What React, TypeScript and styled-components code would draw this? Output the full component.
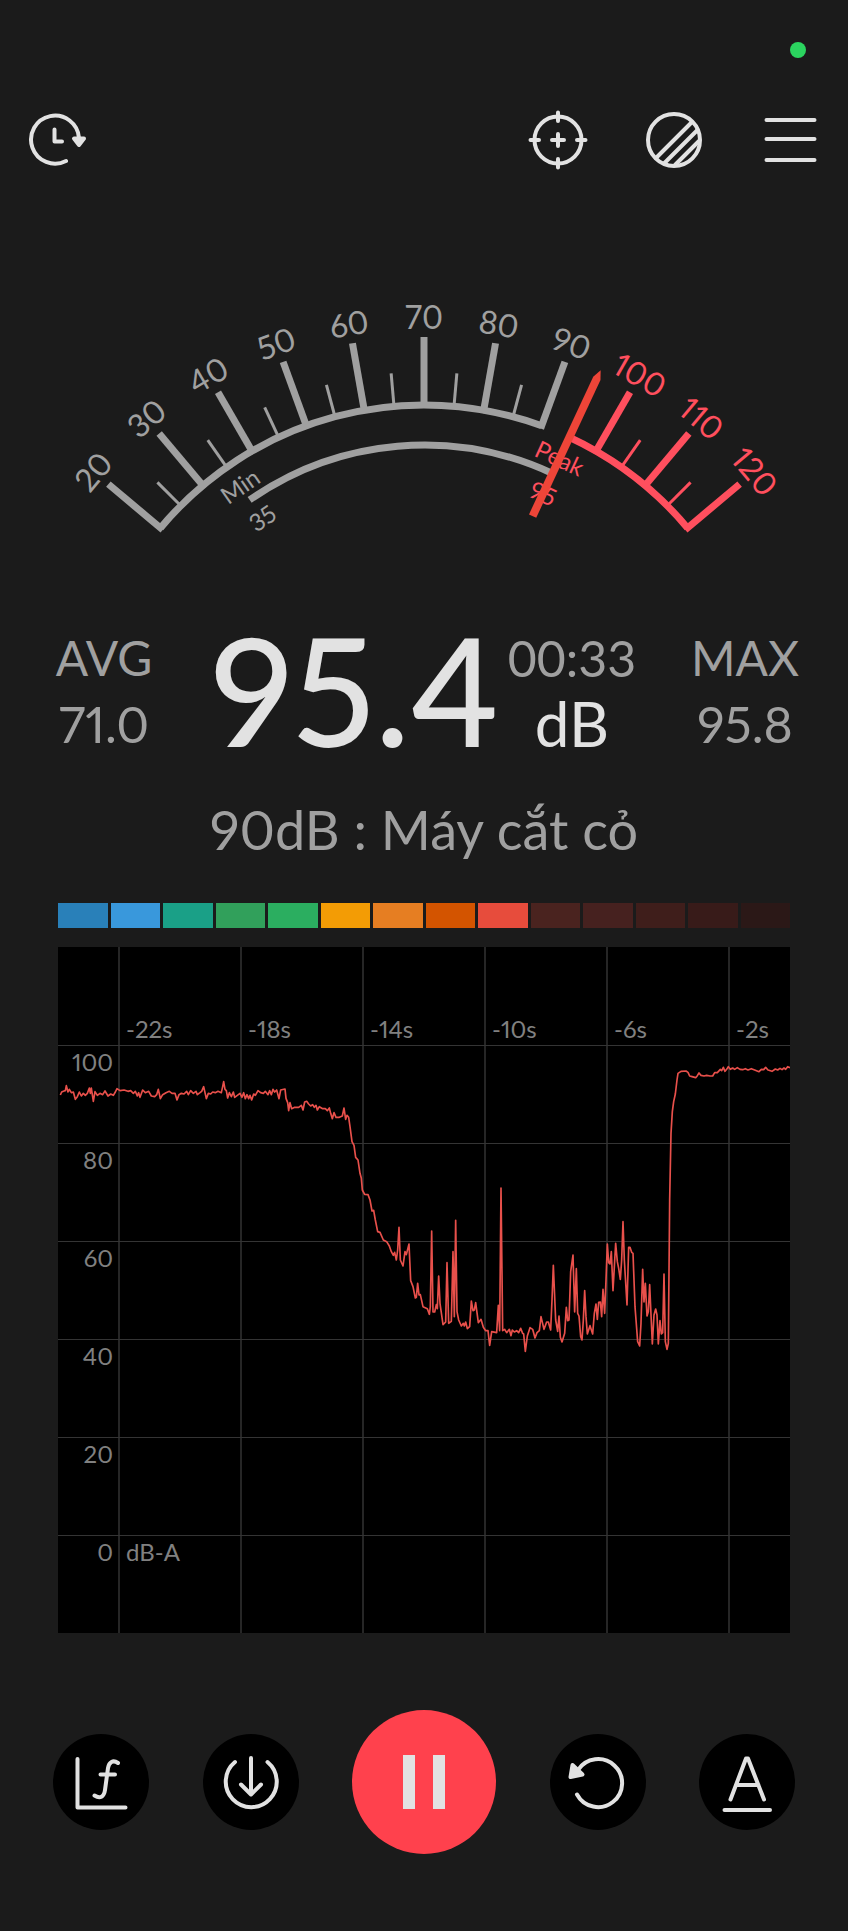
import React from "react";
import styled, { createGlobalStyle } from "styled-components";

const color = {
  page: "#1b1b1b",
  black: "#000000",
  white: "#e2e2e2",
  grey: "#a0a0a0",
  axis: "#808080",
  grid: "#262626",
  danger: "#ff4f5e",
  needle: "#ee4538",
  trace: "#e8504b",
  record: "#ff414d",
};

const GlobalStyle = createGlobalStyle`
  *, *::before, *::after { box-sizing: border-box; }
  body {
    margin: 0;
    background: ${color.page};
    font-family: Lato, "Noto Sans", sans-serif;
    font-variant-numeric: proportional-nums;
    color: ${color.grey};
  }
`;

const Page = styled.main`
  min-height: 100vh;
  display: flex;
  flex-direction: column;
  padding-bottom: 76px;
  background: ${color.page};
`;

const StatusBar = styled.div`
  display: flex;
  justify-content: flex-end;
  padding: 42px 42px 0;
`;

const MicDot = styled.span`
  width: 16px;
  height: 16px;
  border-radius: 50%;
  background: #2bd45f;
`;

const TopBar = styled.header`
  display: flex;
  align-items: center;
  justify-content: space-between;
  padding: 52px 28px 120px;
`;

const TopActions = styled.nav`
  display: flex;
  gap: 56px;
`;

const IconButton = styled.button`
  width: 60px;
  height: 60px;
  padding: 0;
  border: 0;
  background: none;
  color: ${color.white};
  cursor: pointer;
`;

const RoundButton = styled.button<{ $primary?: boolean }>`
  display: flex;
  align-items: center;
  justify-content: center;
  width: ${(p) => (p.$primary ? 144 : 96)}px;
  height: ${(p) => (p.$primary ? 144 : 96)}px;
  padding: 0;
  border: 0;
  border-radius: 50%;
  background: ${(p) => (p.$primary ? color.record : color.black)};
  color: ${color.white};
  cursor: pointer;
`;

const Drawing = styled.svg`
  display: block;
  fill: none;
  stroke: currentColor;
  stroke-width: 4;
  stroke-linecap: round;
  stroke-linejoin: round;
`;

const Gauge = styled.svg`
  display: block;
  width: 100%;
  height: auto;
`;

const GaugeText = styled.text<{ $size: number }>`
  font-size: ${(p) => p.$size}px;
  text-anchor: middle;
`;

const Readouts = styled.section`
  display: grid;
  grid-template-columns: 100px auto 104px;
  justify-content: space-between;
  padding: 79px 51px 0 54px;
`;

const Stack = styled.div`
  display: flex;
  flex-direction: column;
  align-items: center;
`;

const Stat = styled.span`
  font-size: 50px;
  line-height: 66px;
  white-space: nowrap;
`;

const StatLabel = styled(Stat)`
  font-size: 48px;
`;

const Level = styled.div`
  display: flex;
  gap: 8px;
  color: ${color.white};
`;

const LevelValue = styled.strong`
  font-size: 150px;
  font-weight: 500;
  line-height: 128px;
`;

const Elapsed = styled(Stat)`
  color: ${color.grey};
  font-variant-numeric: tabular-nums;
`;

const Unit = styled.span`
  font-size: 62px;
  line-height: 64px;
`;

const Caption = styled.p`
  margin: 41px 0;
  font-size: 54px;
  line-height: 64px;
  text-align: center;
`;

const Scale = styled.div`
  display: flex;
  gap: 3px;
  margin: 0 58px 19px;
`;

const Segment = styled.span<{ $fill: string }>`
  flex: 1;
  height: 25px;
  background: ${(p) => p.$fill};
`;

const ChartPanel = styled.figure`
  margin: 0 58px 77px;
  background: ${color.black};
`;

const Chart = styled.svg`
  display: block;
  width: 100%;
  height: auto;
`;

const AxisText = styled.text`
  font-size: 24px;
  fill: ${color.axis};
`;

const Controls = styled.footer`
  display: flex;
  align-items: center;
  justify-content: space-between;
  padding: 0 53px;
`;

const segments = [
  "#2980b9", "#3998dc", "#1aa087", "#31a05b", "#2bae60", "#f39c05", "#e67e22",
  "#d35400", "#e74c3c", "#4a231f", "#46211f", "#3f1e1b", "#381b19", "#2b1817",
];

/* Dial geometry: every mark is drawn upright and turned about the hub. */
const HUB_X = 424;
const HUB_Y = 459;
const ARC = 344;
const PEAK_ARC = 304;

const angleOf = (db: number) => db - 70;
const turn = (db: number) => `rotate(${angleOf(db)} ${HUB_X} ${HUB_Y})`;

function arcPath(radius: number, from: number, to: number) {
  const at = (db: number) => {
    const a = (angleOf(db) * Math.PI) / 180;
    return `${HUB_X + radius * Math.sin(a)} ${HUB_Y - radius * Math.cos(a)}`;
  };
  return `M${at(from)}A${radius} ${radius} 0 0 1 ${at(to)}`;
}

const majors = [20, 30, 40, 50, 60, 70, 80, 90, 100, 110, 120];
const minors = [25, 35, 45, 55, 65, 75, 85, 105, 115];
const tone = (db: number) => (db > 90 ? color.danger : color.grey);

function LevelGauge() {
  return (
    <Gauge viewBox="0 0 848 256" role="img" aria-label="Sound level dial">
      <g fill="none" strokeWidth="7">
        <path d={arcPath(ARC, 20, 90)} stroke={color.grey} />
        <path d={arcPath(ARC, 95, 120)} stroke={color.danger} />
        <path d={arcPath(PEAK_ARC, 35, 95)} stroke={color.grey} />
      </g>
      {majors.map((db) => (
        <g key={db} transform={turn(db)}>
          <line x1={HUB_X} x2={HUB_X} y1="47" y2="118" stroke={tone(db)} strokeWidth="7" />
          <GaugeText $size={32} x={HUB_X} y="39" fill={tone(db)}>{db}</GaugeText>
        </g>
      ))}
      {minors.map((db) => (
        <line
          key={db}
          transform={turn(db)}
          x1={HUB_X}
          x2={HUB_X}
          y1="82"
          y2="114"
          stroke={tone(db)}
          strokeWidth="3"
        />
      ))}
      <g transform={turn(35)} fill={color.grey}>
        <GaugeText $size={24} x={HUB_X} y="147">Min</GaugeText>
        <GaugeText $size={24} x={HUB_X} y="186">35</GaugeText>
      </g>
      <g transform={turn(95)} fill={color.danger}>
        <GaugeText $size={24} x={HUB_X} y="147">Peak</GaugeText>
        <GaugeText $size={24} x={HUB_X} y="186">95</GaugeText>
      </g>
      <path
        transform={turn(95)}
        d="M420 202V50L424 41L428 50V202Z"
        fill={color.needle}
      />
    </Gauge>
  );
}

/* Level history, three units to a pixel. */
const history =
  "7,444 11,435 18,432 22,431 25,416 30,435 34,427 40,437 46,435 52,457 58,449 64,435 70,447 76,439 82,445 88,439 94,423 97,439 100,423 106,463 111,434 118,445 126,439 134,443 141,432 150,447 158,441 166,445 172,435 177,425 186,431 198,429 210,433 218,431 226,439 232,433 238,447 242,437 246,451 254,429 262,437 272,433 280,447 290,449 296,443 301,427 307,455 314,443 324,437 334,433 342,439 351,439 357,459 363,443 370,439 378,441 386,433 391,443 398,431 406,439 414,433 418,443 426,437 431,433 437,419 445,455 451,439 458,441 464,435 472,437 480,433 490,437 494,419 497,404 501,427 505,431 509,453 514,437 520,449 526,435 530,451 538,445 546,439 552,451 557,437 562,455 567,443 572,455 576,445 581,459 587,441 592,445 600,431 608,437 616,439 622,433 630,443 635,431 640,443 645,427 650,435 656,429 663,455 668,429 681,426 684,454 689,467 692,491 696,467 701,485 710,481 722,481 730,475 735,489 740,465 746,463 752,471 758,477 764,473 769,481 774,475 778,489 784,479 794,485 802,485 808,491 814,483 818,499 823,515 828,497 834,511 844,511 853,507 858,483 863,517 867,505 872,511 876,539 882,584 888,595 893,631 900,639 906,679 910,694 " +
  "913,729 920,742 930,743 936,759 942,792 947,790 952,819 959,854 966,856 976,879 986,884 994,897 1000,914 1006,925 1010,916 1015,939 1019,909 1023,841 1027,939 1035,957 1041,914 1045,923 1053,891 1058,1001 1065,1019 1072,1053 1075,1051 1079,1009 1083,1044 1087,1043 1095,1079 1108,1085 1114,1102 1117,1079 1121,852 1125,1095 1130,1095 1135,1073 1138,1085 1142,987 1146,1069 1155,1133 1163,1125 1167,947 1172,1129 1180,1123 1185,914 1189,1109 1193,820 1197,1094 1202,1119 1210,1137 1216,1129 1219,1137 1223,1125 1228,1145 1235,1139 1240,1062 1245,1091 1249,1089 1253,1067 1261,1127 1269,1117 1276,1141 1283,1151 1290,1151 1295,1195 1301,1154 1316,1157 1321,1075 1325,1151 1329,723 1334,1151 1340,1147 1346,1157 1354,1147 1359,1166 1363,1149 1369,1155 1376,1151 1382,1157 1388,1144 1394,1159 1397,1161 1402,1213 1408,1167 1416,1142 1424,1147 1431,1173 1437,1157 1444,1151 " +
  "1449,1109 1458,1147 1466,1125 1471,1125 1478,1149 1482,1059 1486,955 1493,1119 1499,1153 1503,1107 1507,1171 1512,1185 1520,1159 1525,1081 1529,1121 1533,1119 1538,974 1545,924 1550,1095 1555,965 1559,1099 1563,1107 1568,1169 1572,1179 1576,1119 1580,1031 1584,1109 1588,1161 1596,1136 1604,1161 1609,1099 1614,1071 1618,1117 1622,1066 1627,1065 1631,1109 1635,1027 1640,1099 1644,999 1648,891 1652,947 1656,951 1660,914 1665,1031 1673,889 1678,944 1682,964 1687,997 1691,939 1695,824 1699,939 1707,1074 1712,901 1716,901 1721,916 1725,919 1731,1079 1739,1184 1745,1197 1749,1129 1754,967 1758,1065 1762,1009 1767,1107 1771,1094 1775,1013 1783,1191 1788,1104 1793,1086 1797,1104 1801,1191 1806,1121 1810,1161 1814,1157 1818,981 1822,1184 1827,1207 1831,1189 1835,759 " +
  "1839,559 1843,494 1847,464 1852,441 1857,399 1860,379 1869,373 1884,372 1890,376 1895,387 1902,389 1913,392 1918,386 1923,378 1929,385 1938,387 1946,385 1956,387 1964,387 1970,377 1978,377 1987,367 1991,371 1996,361 2001,373 2006,367 2011,359 2017,367 2024,363 2030,367 2038,362 2046,367 2054,368 2062,365 2070,369 2080,365 2090,369 2103,374 2110,367 2117,368 2123,361 2130,369 2142,373 2152,366 2159,369 2166,364 2172,368 2178,363 2183,367 2189,359 2196,362";

const times = [22, 18, 14, 10, 6, 2];
const levels = [100, 80, 60, 40, 20, 0];

function HistoryChart() {
  return (
    <ChartPanel>
      <Chart viewBox="0 0 732 686" role="img" aria-label="Sound level history">
        {times.map((t, i) => (
          <rect key={t} x={60 + i * 122} y="0" width="2" height="686" fill={color.grid} />
        ))}
        {levels.map((l, i) => (
          <rect key={l} x="0" y={98 + i * 98} width="732" height="1" fill="#343434" />
        ))}
        {times.map((t, i) => (
          <AxisText key={t} x={68 + i * 122} y="91">{`-${t}s`}</AxisText>
        ))}
        {levels.map((l, i) => (
          <AxisText key={l} x="55" y={124 + i * 98} textAnchor="end">{l}</AxisText>
        ))}
        <AxisText x="68" y="614">dB-A</AxisText>
        <svg width="732" height="686" viewBox="0 0 2196 2058">
          <polyline
            points={history}
            fill="none"
            stroke={color.trace}
            strokeWidth="5"
            strokeLinejoin="round"
          />
        </svg>
      </Chart>
    </ChartPanel>
  );
}

export default function App() {
  return (
    <>
      <GlobalStyle />
      <Page>
        <StatusBar>
          <MicDot />
        </StatusBar>
        <TopBar>
          <IconButton type="button" aria-label="History">
            <Drawing width="60" height="60" viewBox="0 0 60 60">
              <path d="M38 51A24 24 0 1 1 51 28" />
              <path d="M26.500 19.500V31.500H34" />
              <path d="M46 28.500H56L51 35Z" fill="currentColor" />
            </Drawing>
          </IconButton>
          <TopActions>
            <IconButton type="button" aria-label="Calibrate">
              <Drawing width="60" height="60" viewBox="0 0 60 60">
                <circle cx="30" cy="30" r="23.500" />
                <path d="M30 2.500V11M30 49V57.500M2.500 30H11M49 30H57.500M30 24V36M24 30H36" />
              </Drawing>
            </IconButton>
            <IconButton type="button" aria-label="Theme">
              <Drawing width="60" height="60" viewBox="0 0 60 60">
                <circle cx="30" cy="30" r="26" />
                <path d="M12 48L47.500 12.500M20.500 53L53 20.500M31 55L55 31" />
              </Drawing>
            </IconButton>
            <IconButton type="button" aria-label="Menu">
              <Drawing width="60" height="60" viewBox="0 0 60 60">
                <path d="M6.500 10H54.500M6.500 29H54.500M6.500 50H54.500" />
              </Drawing>
            </IconButton>
          </TopActions>
        </TopBar>

        <LevelGauge />

        <Readouts>
          <Stack>
            <StatLabel>AVG</StatLabel>
            <Stat>71.0</Stat>
          </Stack>
          <Level>
            <LevelValue>95.4</LevelValue>
            <Stack>
              <Elapsed>00:33</Elapsed>
              <Unit>dB</Unit>
            </Stack>
          </Level>
          <Stack>
            <StatLabel>MAX</StatLabel>
            <Stat>95.8</Stat>
          </Stack>
        </Readouts>
        <Caption>90dB : Máy cắt cỏ</Caption>

        <Scale>
          {segments.map((fill) => (
            <Segment key={fill} $fill={fill} />
          ))}
        </Scale>
        <HistoryChart />

        <Controls>
          <RoundButton type="button" aria-label="Frequency chart">
            <Drawing width="96" height="96" viewBox="0 0 96 96">
              <path d="M24.500 25V73.500H72.500" />
              <path d="M65 29C60 25.500 56 28 55 34L52 56C51 63 47 65 41.500 61.500M47.500 40.500H62" />
            </Drawing>
          </RoundButton>
          <RoundButton type="button" aria-label="Save">
            <Drawing width="96" height="96" viewBox="0 0 96 96">
              <path d="M32 28A25.500 25.500 0 1 0 64.500 28" />
              <path d="M48 24V60M38 50.500L48 60.500L58 50.500" />
            </Drawing>
          </RoundButton>
          <RoundButton type="button" aria-label="Pause" $primary>
            <svg width="144" height="144" viewBox="0 0 144 144" fill="currentColor">
              <rect x="51" y="45" width="12" height="54" />
              <rect x="81" y="45" width="12" height="54" />
            </svg>
          </RoundButton>
          <RoundButton type="button" aria-label="Reset">
            <Drawing width="96" height="96" viewBox="0 0 96 96">
              <path d="M28 36A24 24 0 1 1 27 60.500" />
              <path d="M22.500 31L32.500 40.500L20.500 43Z" fill="currentColor" />
            </Drawing>
          </RoundButton>
          <RoundButton type="button" aria-label="Weighting">
            <Drawing width="96" height="96" viewBox="0 0 96 96">
              <path d="M31.500 65.500L47 24.500H49L65 65.500M37 51H59.500M25.500 76H71" />
            </Drawing>
          </RoundButton>
        </Controls>
      </Page>
    </>
  );
}
